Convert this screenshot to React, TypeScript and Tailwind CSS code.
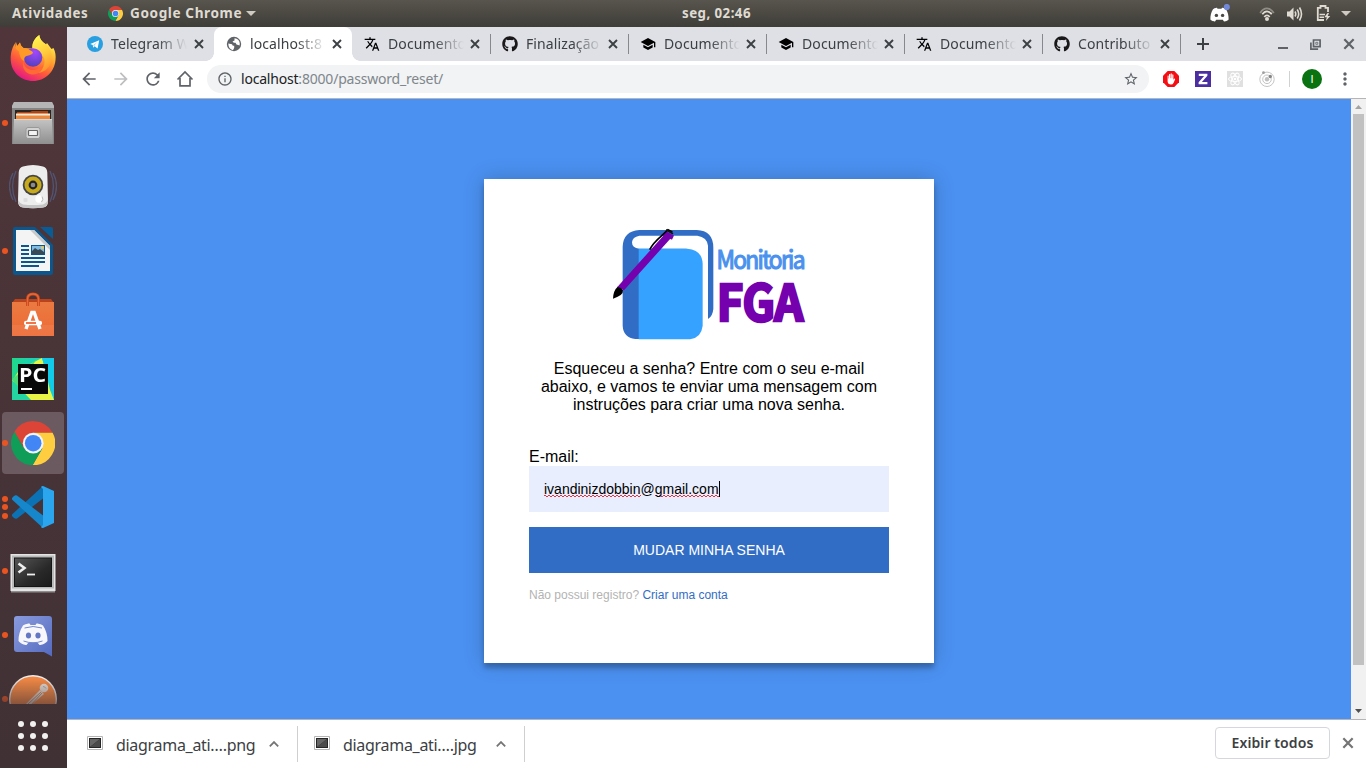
import React from "react";
import {
  MdAdd,
  MdArrowBack,
  MdArrowForward,
  MdInfoOutline,
  MdMoreVert,
  MdRefresh,
  MdSchool,
  MdStarBorder,
  MdTranslate,
} from "react-icons/md";
import { FaGithub } from "react-icons/fa";

const UI = "font-['Noto_Sans','Open_Sans',sans-serif]";

function ChromeLogo({ className }: { className: string }) {
  return (
    <svg viewBox="-22.2 -22.2 44.4 44.4" className={className}>
      <path d="M19.4-10.5H0L-9.1 5.25-18.8-11.55A22.05 22.05 0 0 1 19.4-10.5Z" fill="#db4437" />
      <path d="M19.4-10.5H0L9.1 5.25-.6 22.05A22.05 22.05 0 0 0 19.4-10.5Z" fill="#ffcd40" />
      <path d="M-.6 22.05 9.1 5.25H-9.1L-18.8-11.55A22.05 22.05 0 0 0-.6 22.05Z" fill="#0f9d58" />
      <circle r="10.4" fill="#f4f4f4" />
      <circle r="8.3" fill="#4285f4" />
    </svg>
  );
}

function CloseIcon({ className }: { className: string }) {
  return (
    <svg viewBox="0 0 12 12" className={className} fill="none" stroke="currentColor" strokeWidth="1.900">
      <path d="m2 2 8 8M10 2l-8 8" />
    </svg>
  );
}

function TopBar() {
  return (
    <header
      className={`${UI} flex h-[27px] w-full items-center bg-gradient-to-b from-[#58554e] to-[#3f3d38] text-[13.3px] font-bold text-[#dfdbd2]`}
    >
      <div className="flex w-[456px] items-center pl-3">
        <span className="w-[96px] whitespace-nowrap tracking-[0.65px]">Atividades</span>
        <ChromeLogo className="h-[15px] w-[15px]" />
        <span className="ml-[7px] w-[111px] whitespace-nowrap tracking-[0.6px] text-[13.600px]">Google Chrome</span>
        <svg viewBox="0 0 10 5" className="ml-[5px] h-[5px] w-[10px]">
          <path d="M0 0h10L5 5z" fill="#cfcbc3" />
        </svg>
      </div>
      <div className="w-[521px] text-center text-[13.3px] tracking-[0.45px]">seg, 02:46</div>
      <div className="flex flex-1 items-center pl-[231px]">
        <svg viewBox="0 0 22 20" className="h-5 w-[22px] shrink-0">
          <path
            d="M5 5.2C7 3.8 9 3.8 9 3.8l.5.9h4l.5-.9s2 0 4 1.4c1.8 3 2.8 6.500 2.600 10.300-1.500 1.900-4.600 2-4.600 2l-1.200-1.700H8.200L7 17.500s-3.100-.1-4.600-2C2.200 11.700 3.200 8.200 5 5.200Z"
            fill="#fff"
          />
          <circle cx="8.400" cy="11.400" r="1.700" fill="#4b4943" />
          <circle cx="14.600" cy="11.400" r="1.700" fill="#4b4943" />
          <circle cx="18.800" cy="3" r="3.100" fill="#7289da" />
        </svg>
        <svg viewBox="0 0 16 16" className="ml-[29px] h-4 w-4 shrink-0" fill="none" stroke="#dfdbd2">
          <path d="M1.200 6C5-.1 11 -.1 14.800 6" transform="translate(0 1)" strokeWidth="1.800" opacity=".45" />
          <path d="M3.300 8.300c2.700-4 6.700-4 9.400 0" strokeWidth="1.700" />
          <path d="M5.300 11c1.500-2.300 3.900-2.300 5.400 0" strokeWidth="1.700" />
          <circle cx="8" cy="13" r="2" fill="#dfdbd2" stroke="none" />
        </svg>
        <svg viewBox="0 0 17 16" className="ml-[11px] h-4 w-[17px] shrink-0" fill="none" stroke="#dfdbd2">
          <path d="M1 5.500h2.500L7.500 1.500v13l-4-4H1z" fill="#dfdbd2" stroke="none" />
          <path d="M9 5.500q1.500 2.500 0 5M11.200 3.500q3 4.500 0 9M13.500 1.500q4 6.500 0 13" strokeWidth="1.600" />
        </svg>
        <svg viewBox="0 0 15 17" className="ml-[13px] h-[17px] w-[15px] shrink-0" fill="none" stroke="#dfdbd2">
          <path d="M12 7V2.800H9.500V1h-5v1.800H1.800V15H8" strokeWidth="1.800" />
          <path d="M3.500 9.500H9M3.500 12.200H8" strokeWidth="1.500" />
          <path d="m11.500 8-3.200 4.200h2.500L9.800 16l4.500-5h-2.600L13 8z" fill="#dfdbd2" stroke="none" />
        </svg>
        <svg viewBox="0 0 10 5" className="ml-[10px] h-[5px] w-[10px] shrink-0">
          <path d="M0 0h10L5 5z" fill="#cfcbc3" />
        </svg>
      </div>
    </header>
  );
}

function Firefox() {
  return (
    <svg viewBox="0 0 48 48" className="-mt-[2px] h-12 w-12">
      <defs>
        <linearGradient id="ffBody" x1=".8" y1=".1" x2=".3" y2="1">
          <stop offset="0" stopColor="#fff44f" />
          <stop offset=".35" stopColor="#ffa52e" />
          <stop offset=".65" stopColor="#ff5a3a" />
          <stop offset="1" stopColor="#e31587" />
        </linearGradient>
        <linearGradient id="ffFlame" x1=".4" y1="0" x2=".7" y2="1">
          <stop offset="0" stopColor="#fff44f" />
          <stop offset=".5" stopColor="#ffcb3c" />
          <stop offset="1" stopColor="#ff8a2b" />
        </linearGradient>
        <radialGradient id="ffGlobe" cx=".6" cy=".2" r=".9">
          <stop offset="0" stopColor="#a347ff" />
          <stop offset="1" stopColor="#4b3fb5" />
        </radialGradient>
      </defs>
      <path
        d="M7 8C6 11 6.500 13 6.500 14.500l4.500-6c.500 2.500 1.500 4 3.500 5.500l9 .5C23 8 26 4 30.300 1c.500 5 3.700 7 6.700 9.500l1-1.500 4.500 6 2-1c2 4 2.500 8 2 12C45.500 38 36 47 24 47S2 38 1.700 25.500C1.600 18 3.500 12.500 7 8Z"
        fill="url(#ffBody)"
      />
      <path
        d="M30.300 1c.500 5 3.700 7 6.700 9.500C42 14.500 44 21 42 28c-2 7-8 11-14 11 6-3 9-9 7-15-2-5-7-6-11.500-9C22.500 9 26 4 30.300 1Z"
        fill="url(#ffFlame)"
      />
      <circle cx="24" cy="23.500" r="9.300" fill="url(#ffGlobe)" />
      <path
        d="M7 8c.5 2 1 3 1.500 3.800L11 8.500c.5 2.500 1.500 4 3.500 5.500 3 .2 5 1 7 2.600 1.300.9 2.500 1.200 2.500 2.400-2 2.500-5 2-7.500 3.500-1.500 1-1.500 3-1 5-4-2-5-7-5.500-10L6 14Z"
        fill="#ff9a28"
      />
      <path d="M14.500 25c-1 8 5 11.500 10.500 11 4-.4 7-2 9-5 0 6-5 10-11 9.500C16 40 12 33 14.500 25Z" fill="#ff6a35" />
    </svg>
  );
}

function Files() {
  return (
    <svg viewBox="0 0 48 48" className="h-12 w-12">
      <defs>
        <linearGradient id="fileFront" x1="0" y1="0" x2="0" y2="1">
          <stop offset="0" stopColor="#c4c4c4" />
          <stop offset="1" stopColor="#8f8f8f" />
        </linearGradient>
      </defs>
      <path d="M5 3h38l2 4v38H3V7z" fill="#858585" />
      <path d="M5 3h38l2 4v2H3V7z" fill="#b5b5b5" />
      <path d="M6 11h36v9H6z" fill="#2b2522" />
      <path d="M8 13h13l2-1h16v8H8z" fill="#b5410d" />
      <path d="M7 14.500h34V20H7z" fill="#f4ead9" />
      <path d="M7 16.500h34V20H7z" fill="#f0883c" />
      <path d="M5 20h38l1 25H4z" fill="url(#fileFront)" />
      <path d="M5 20.500h38" stroke="#d6d6d6" />
      <rect x="17" y="28.500" width="14" height="11" rx="2" fill="#d2d2d2" stroke="#989898" />
      <rect x="19.500" y="31.500" width="9" height="5" rx=".5" fill="#f3f3f3" stroke="#666" strokeWidth="1.200" />
    </svg>
  );
}

function Rhythmbox() {
  return (
    <svg viewBox="0 0 48 48" className="h-12 w-12">
      <g fill="none" stroke="#5878b4" strokeWidth="1.400" opacity=".45">
        <path d="M4 10q-7 13 0 27M7 8q-7 15 0 31M44 10q7 13 0 27M41 8q7 15 0 31" />
      </g>
      <path d="M14 3.500q10-3 20 0 4 1 4.300 6L39 38q0 6-5 6.500-10 1.500-20 0-5-.5-5-6.500l.7-28.500q.3-5 4.300-6Z" fill="#ededed" />
      <path d="M9 36q0 8 5 8.500 10 1.500 20 0 5-.5 5-8.500-1 4-5 5.500-10 1-20 0-4-1.500-5-5.500Z" fill="#c5c5c5" />
      <circle cx="24" cy="22" r="10.300" fill="#444" />
      <circle cx="24" cy="22" r="8.500" fill="#c7a91c" />
      <circle cx="24" cy="22" r="4.400" fill="#252525" />
      <circle cx="24" cy="22" r="2.300" fill="#8b8b8b" />
      <circle cx="30" cy="36" r="3.700" fill="#fff" />
      <path d="M33 33.500q2 3-.5 5.500" stroke="#b5b5b5" fill="none" />
      <rect x="14.500" y="35" width="4" height="4" rx="1" fill="#ddd" />
    </svg>
  );
}

function Writer() {
  return (
    <svg viewBox="0 0 48 48" className="h-12 w-12">
      <path d="M6 0h20l18 18v28q0 2-2 2H6q-2 0-2-2V2q0-2 2-2Z" fill="#0b568c" />
      <path d="M31 0h11q2 0 2 2v10z" fill="#0a5c96" />
      <path d="M7 3h18l16 16v25H7z" fill="#f4f4f4" />
      <path d="m25 3 16 16v4L21 3z" fill="#c9c9c9" />
      <g fill="#0b568c">
        <path d="M12 18h8v2h-8zM12 22h8v2h-8zM12 26h8v2h-8zM12 30h24v2H12zM12 34h24v2H12zM12 38h18v2H12z" />
        <path d="M22 18h14v10H22z" />
      </g>
      <path d="M23 19h12v8H23z" fill="#7fbde6" />
      <path d="m23 27 0-3 3-3 3 2 2-1 4 3v2z" fill="#394a55" />
      <circle cx="33.500" cy="20.500" r="1.500" fill="#f3c74a" />
    </svg>
  );
}

function Software() {
  return (
    <svg viewBox="0 0 48 48" className="h-12 w-12">
      <defs>
        <linearGradient id="bag" x1="0" y1="0" x2="0" y2="1">
          <stop offset="0" stopColor="#ea7a41" />
          <stop offset="1" stopColor="#ee6a35" />
        </linearGradient>
      </defs>
      <path d="M6 8h36l3 4H3z" fill="#b8431c" />
      <path d="M3 11h42v34H3z" fill="url(#bag)" />
      <path d="M3 34h42v11H3z" fill="#fff" opacity=".07" />
      <path d="M18.500 15V8q0-5 5.500-5t5.500 5v7" fill="none" stroke="#c9491c" strokeWidth="3" />
      <path d="M18.500 15V8q0-5 5.500-5t5.500 5v7" fill="none" stroke="#e8683a" strokeWidth="1.300" />
      <path d="m17 38 5.800-16.500h2.400L31 38" fill="none" stroke="#fff" strokeWidth="3.400" />
      <rect x="15" y="29.800" width="18" height="4.400" rx="2" fill="#fff" />
      <path d="M17 32h10" stroke="#e95420" strokeWidth="1.600" />
    </svg>
  );
}

function PyCharm() {
  return (
    <svg viewBox="0 0 48 48" className="h-12 w-12">
      <defs>
        <linearGradient id="pyBg" x1="0" y1="0" x2="1" y2="0">
          <stop offset="0" stopColor="#21d789" />
          <stop offset="1" stopColor="#16cbe0" />
        </linearGradient>
      </defs>
      <path d="M3 3h42v42H3z" fill="url(#pyBg)" />
      <path d="m3 26 8-12 22-11 2 7 6 25 4 10H20z" fill="#e6f545" />
      <path d="m3 24 25-20L18 18 9 34z" fill="#4bdc78" />
      <path d="M3 25v20h19z" fill="#25d5a1" />
      <path d="M33 3h12v39z" fill="#12cbe8" />
      <path d="M9 9h30v30H9z" fill="#080808" />
      <text
        x="10"
        y="26.500"
        fill="#fff"
        fontSize="20"
        fontWeight="700"
        textLength="27"
        lengthAdjust="spacingAndGlyphs"
        className="font-['Open_Sans','Noto_Sans',sans-serif]"
      >
        PC
      </text>
      <path d="M12 33h11v2H12z" fill="#fff" />
    </svg>
  );
}

function VsCode() {
  return (
    <svg viewBox="0 0 48 48" className="h-12 w-12">
      <path d="M34 3v12.500L8 35.500q-1.500.7-3-.5l-1.700-1.700q-.8-1.300.2-2.300Z" fill="#0a72b5" />
      <path d="M34 45V32.500L8 12.500q-1.500-.7-3 .5l-1.700 1.700q-.8 1.300.2 2.300Z" fill="#1687cb" />
      <path d="m34 3 11 5v32l-11 5q-1.500 0-2-1l2-2V6l-2-2q.5-1 2-1Z" fill="#2aa5ee" />
    </svg>
  );
}

function Terminal() {
  return (
    <svg viewBox="0 0 48 48" className="h-12 w-12">
      <defs>
        <linearGradient id="term" x1="0" y1="0" x2="1" y2="1">
          <stop offset="0" stopColor="#555" />
          <stop offset=".6" stopColor="#292929" />
          <stop offset="1" stopColor="#1b1b1b" />
        </linearGradient>
      </defs>
      <path d="M2 8h44v37.500H2z" fill="#8e8e8e" />
      <path d="M1.500 7h45v37h-45z" fill="#e4e4e4" />
      <path d="M3 8.500h42v33H3z" fill="#b9b9b9" />
      <path d="M5 10.500h38V40H5z" fill="#151515" />
      <path d="M6 11.500h36V39H6z" fill="url(#term)" />
      <path d="m9.500 16.500 6 4.500-6 4.500" fill="none" stroke="#eee" strokeWidth="2.600" />
      <path d="M18 27.500h8" stroke="#eee" strokeWidth="1.800" />
    </svg>
  );
}

function Discord() {
  return (
    <svg viewBox="0 0 48 48" className="h-12 w-12">
      <defs>
        <linearGradient id="disc" x1="0" y1="0" x2="1" y2="1">
          <stop offset="0" stopColor="#8a9bdd" />
          <stop offset="1" stopColor="#536ac0" />
        </linearGradient>
      </defs>
      <path d="M8 5h32q3 0 3 3v37.500l-9-5L36 41H8q-3 0-3-3V8q0-3 3-3Z" fill="url(#disc)" />
      <path
        d="M14 14.500c3.500-2 6.500-2 6.500-2l1 1.500h5l1-1.500s3 0 6.500 2c3 4.500 4.700 10 4.500 15.500-3 4-8 4-8 4l-2-2.500h-9l-2 2.500s-5 0-8-4C9.300 24.500 11 19 14 14.500Z"
        fill="#f7f7fb"
      />
      <ellipse cx="19.500" cy="24.500" rx="2.600" ry="2.900" fill="#6377c4" />
      <ellipse cx="29" cy="24.500" rx="2.600" ry="2.900" fill="#6377c4" />
      <path d="M15.500 17q8.500-3 17.500 0M14.500 30q9.500 3.500 19 0" fill="none" stroke="#7386cf" strokeWidth="1" />
    </svg>
  );
}

function Postman() {
  return (
    <svg viewBox="0 0 48 48" className="h-12 w-12">
      <circle cx="24" cy="24" r="24" fill="#eee" />
      <circle cx="24" cy="24" r="22.600" fill="#f58a45" />
      <path d="m17 29 14-14 4 4-14 12z" fill="#eadfd6" />
      <path d="m19 29 13-12M21 31l12-13" stroke="#b77a4c" strokeWidth=".8" />
      <circle cx="35" cy="13" r="4.300" fill="#eadfd6" />
      <path d="M34 11.500q2 0 3 2" stroke="#aaa" fill="none" />
    </svg>
  );
}

const dock: { icon: React.ReactNode; dots: number; active?: boolean }[] = [
  { icon: <Firefox />, dots: 0 },
  { icon: <Files />, dots: 1 },
  { icon: <Rhythmbox />, dots: 0 },
  { icon: <Writer />, dots: 1 },
  { icon: <Software />, dots: 0 },
  { icon: <PyCharm />, dots: 0 },
  { icon: <ChromeLogo className="m-[1.800px] h-[44.400px] w-[44.400px]" />, dots: 1, active: true },
  { icon: <VsCode />, dots: 3 },
  { icon: <Terminal />, dots: 1 },
  { icon: <Discord />, dots: 1 },
  { icon: <Postman />, dots: 1 },
];

function Dock() {
  return (
    <aside className="flex h-[741px] w-[67px] shrink-0 flex-col bg-gradient-to-b from-[#50363a] to-[#403135]">
      <div className="h-[677px] overflow-hidden [mask-image:linear-gradient(to_bottom,#000_650px,#0006_677px)]">
        <div className="flex flex-col">
          {dock.map((item, i) => (
            <div key={i} className="flex h-16 shrink-0 items-center">
              <div
                className={
                  item.active
                    ? "ml-[2px] flex h-[62px] w-[62px] items-center rounded-[4px] bg-[#6b5b60]"
                    : "ml-[2px] flex h-[62px] w-[62px] items-center"
                }
              >
                <div className="flex w-[7px] flex-col items-start gap-[2.500px]">
                  {Array.from({ length: item.dots }, (_, d) => (
                    <span key={d} className="h-[6px] w-[6px] rounded-full bg-[#e95420]" />
                  ))}
                </div>
                {item.icon}
              </div>
            </div>
          ))}
        </div>
      </div>
      <div className="ml-[18px] mt-[17px] grid w-[30px] grid-cols-3 gap-[6px]">
        {Array.from({ length: 9 }, (_, d) => (
          <span key={d} className="h-[6px] w-[6px] rounded-full bg-[#f2f1f0]" />
        ))}
      </div>
    </aside>
  );
}

function Telegram() {
  return (
    <svg viewBox="0 0 16 16" className="h-4 w-4">
      <circle cx="8" cy="8" r="8" fill="#279fe0" />
      <path d="m3.200 7.900 9-3.700-1.600 8.200-3-2.200-1.400 1.500-.5-2.700z" fill="#fff" />
      <path d="m6 9.300 4.300-3.200-3.200 3.800z" fill="#9fcdea" />
    </svg>
  );
}

function Globe() {
  return (
    <svg viewBox="0 0 16 16" className="h-4 w-4">
      <circle cx="8" cy="8" r="7.200" fill="#5f6368" />
      <path
        d="M2.300 7.500 6 8.300l.8 1.500h1.400v2L7 14.200Q2.300 13 2.300 7.500ZM8.500 2.300q4.700.4 5.300 5.200l-.3 2-1.300-.6-1.700-.4-1-1.800H7.800L6.500 5.500l2-1z"
        fill="#fff"
      />
    </svg>
  );
}

const tabs: { icon: React.ReactNode; label: string; active?: boolean }[] = [
  { icon: <Telegram />, label: "Telegram W" },
  { icon: <Globe />, label: "localhost:8", active: true },
  { icon: <MdTranslate className="h-4 w-4 text-black" />, label: "Documento" },
  { icon: <FaGithub className="h-4 w-4 text-[#191717]" />, label: "Finalização" },
  { icon: <MdSchool className="h-4 w-4 text-black" />, label: "Documento" },
  { icon: <MdSchool className="h-4 w-4 text-black" />, label: "Documento" },
  { icon: <MdTranslate className="h-4 w-4 text-black" />, label: "Documento" },
  { icon: <FaGithub className="h-4 w-4 text-[#191717]" />, label: "Contributo" },
];

function TabStrip() {
  return (
    <div className="flex h-[34px] items-stretch bg-[#dee0e6] pl-[9px]">
      {tabs.map((tab, i) => (
        <div
          key={i}
          className={
            tab.active
              ? "relative flex w-[138px] shrink-0 items-center rounded-t-lg bg-white pl-3"
              : "relative flex w-[138px] shrink-0 items-center pl-3"
          }
        >
          {tab.active && (
            <>
              <span className="absolute bottom-0 -left-2 h-2 w-2 bg-[radial-gradient(circle_at_0_0,transparent_7.500px,#fff_8px)]" />
              <span className="absolute bottom-0 -right-2 h-2 w-2 bg-[radial-gradient(circle_at_100%_0,transparent_7.500px,#fff_8px)]" />
            </>
          )}
          <span className={i === 0 ? "-ml-px flex w-6 shrink-0 items-center" : "flex w-6 shrink-0 items-center"}>
            {tab.icon}
          </span>
          <span
            className={
              i === 0
                ? "-mt-px w-[77px] shrink-0 overflow-hidden whitespace-nowrap text-[14px] tracking-[0.1px] text-[#3c4043] [mask-image:linear-gradient(to_right,#000_46px,transparent_76px)]"
                : "-mt-px w-[76px] shrink-0 overflow-hidden whitespace-nowrap text-[14px] tracking-[0.1px] text-[#3c4043] [mask-image:linear-gradient(to_right,#000_46px,transparent_76px)]"
            }
          >
            {tab.label}
          </span>
          <CloseIcon className="ml-[5px] h-3 w-3 shrink-0 text-[#3c4043]" />
          {i > 1 && <span className="-mr-px ml-auto h-5 w-px bg-[#86888d]" />}
        </div>
      ))}
      <div className="flex flex-1 items-center text-[#3c4043]">
        <svg viewBox="0 0 20 20" className="ml-[13px] h-5 w-5" stroke="currentColor" strokeWidth="2">
          <path d="M4 10h12M10 4v12" />
        </svg>
        <span className="ml-[65px] mt-[8px] h-[2px] w-[10px] bg-[#5f6368]" />
        <svg viewBox="0 0 11 11" className="ml-[22px] h-[11px] w-[11px]" fill="none" stroke="#5f6368" strokeWidth="1.700">
          <path d="M3.500 1h6.600v6.600H3.500zM.9 3.500v6.600h7.200" />
          <path d="M5.800 3.300h2v2h-2z" strokeWidth=".8" />
        </svg>
        <CloseIcon className="ml-[21px] h-[14px] w-[14px] text-[#5f6368]" />
      </div>
    </div>
  );
}

function Toolbar() {
  return (
    <div className="flex h-[38px] items-center border-b border-[#b6b4b6] bg-white pb-px text-[#5f6368]">
      <MdArrowBack className="ml-[12px] h-5 w-5 shrink-0" />
      <MdArrowForward className="ml-[12px] h-5 w-5 shrink-0 text-[#bcbec0]" />
      <MdRefresh className="ml-[12px] h-5 w-5 shrink-0" />
      <svg viewBox="0 0 20 20" className="ml-[12px] h-5 w-5 shrink-0" fill="none" stroke="currentColor" strokeWidth="1.700">
        <path d="M2.500 10.500 10 3l7.500 7.500M5 9v7.800h10V9" />
      </svg>
      <div className="ml-[12px] flex h-7 w-[942px] shrink-0 items-center rounded-full bg-[#f1f3f4]">
        <MdInfoOutline className="ml-[10px] h-4 w-4 shrink-0" />
        <span className="-mt-px ml-[8px] whitespace-nowrap text-[14px] tracking-[-0.2px] text-[#80868b]">
          <span className="text-[#202124]">localhost</span>:8000/password_reset/
        </span>
        <MdStarBorder className="ml-auto mr-[10px] h-4 w-4" />
      </div>
      <svg viewBox="0 0 16 16" className="ml-[14px] h-4 w-4 shrink-0">
        <path d="M4.700 0h6.600L16 4.700v6.600L11.300 16H4.700L0 11.300V4.700z" fill="#f40d12" />
        <path
          d="m4.600 8.200V4.700q.5-.6 1 0V7.500h.4V3.300q.6-.7 1.200 0v4h.4V2.700q.6-.7 1.200 0v4.600h.4V3.700q.6-.7 1.200 0v5l1-1.200q1 0 .7.900l-1.600 3.600q-.7 1.500-2.500 1.500-3.200 0-3.400-3z"
          fill="#fff"
        />
      </svg>
      <svg viewBox="0 0 16 16" className="ml-4 h-4 w-4 shrink-0">
        <path d="M0 0h16v16H0z" fill="#4b2e9f" />
        <path d="M3.800 2.800h8.600v2L6.900 11h5.500v2.200H3.600v-2L9.100 5H3.800z" fill="#fff" />
      </svg>
      <svg viewBox="0 0 16 16" className="ml-4 h-4 w-4 shrink-0">
        <path d="M0 0h16v16H0z" fill="#e0e0e0" />
        <g fill="none" stroke="#fff" strokeWidth="1">
          <ellipse cx="8" cy="8" rx="6.500" ry="2.600" />
          <ellipse cx="8" cy="8" rx="6.500" ry="2.600" transform="rotate(60 8 8)" />
          <ellipse cx="8" cy="8" rx="6.500" ry="2.600" transform="rotate(120 8 8)" />
        </g>
        <circle cx="8" cy="8" r="1.300" fill="#fff" />
      </svg>
      <svg viewBox="0 0 16 16" className="ml-4 h-4 w-4 shrink-0" fill="none" stroke="#c4c4c4">
        <circle cx="8" cy="8.300" r="7.200" />
        <circle cx="8" cy="8.300" r="4.300" />
        <circle cx="8" cy="8.300" r="2.200" fill="#c0c0c0" stroke="none" />
        <circle cx="11.300" cy="5.500" r="1.700" fill="#858585" stroke="none" />
        <circle cx="4.500" cy="1.700" r="1.400" fill="#a0a0a0" stroke="none" />
      </svg>
      <span className="ml-[14px] h-4 w-px bg-[#d0d1d3]" />
      <span className="ml-[12px] flex h-5 w-5 shrink-0 items-center justify-center rounded-full bg-[#0b7211] font-['Liberation_Sans',sans-serif] text-[11px] text-white">
        I
      </span>
      <MdMoreVert className="ml-[13px] h-5 w-5 shrink-0" />
    </div>
  );
}

function Logo() {
  return (
    <svg viewBox="0 0 654 405" className="h-[135px] w-[218px]">
      <path
        d="M118 45H290Q340 47 340 98V282Q338 304 324 312V92Q321 66 292 62H118Q97 66 96 82 96 100 118 101H260L180 372H106Q70 368 68 332V95Q70 48 118 45Z"
        fill="#326dc5"
      />
      <path d="M116 101H262Q306 104 308 146V332Q304 368 270 373H116Z" fill="#35a2ff" />
      <path d="M201 50 219 62 72 226 52 216Z" fill="#7400ae" />
      <path d="M192 55 219 68" stroke="#7400ae" strokeWidth="14" />
      <path d="M149 104Q160 84 182 65L204 44 217 51" fill="none" stroke="#000" strokeWidth="5" />
      <path d="M198 44 219 56" stroke="#111" strokeWidth="5" />
      <path d="M53 215Q64 217 69 226 71 241 39 251 40 226 53 215Z" fill="#000" />
      <text
        x="388"
        y="162"
        transform="scale(.9 1)"
        fill="#4b91ee"
        stroke="#4b91ee"
        strokeWidth="3.500"
        fontSize="76"
        textLength="297"
        lengthAdjust="spacing"
        className="font-['Noto_Sans_CJK_SC','Noto_Sans',sans-serif]"
      >
        Monitoria
      </text>
      <text
        x="381"
        y="317"
        transform="scale(.92 1)"
        fill="#7400ae"
        stroke="#7400ae"
        strokeWidth="8"
        fontSize="148"
        fontWeight="700"
        textLength="282"
        lengthAdjust="spacing"
        className="font-['Noto_Sans_CJK_SC','Noto_Sans',sans-serif]"
      >
        FGA
      </text>
    </svg>
  );
}

function Misspelled({ children }: { children: React.ReactNode }) {
  return (
    <span className="h-4 bg-[linear-gradient(90deg,#e8333a_50%,transparent_50%),linear-gradient(90deg,transparent_50%,#e8333a_50%)] bg-[length:4px_1px,4px_1px] bg-[position:0_14px,0_15px] bg-repeat-x">
      {children}
    </span>
  );
}

function ResetCard() {
  return (
    <main className="flex h-[484px] w-[450px] flex-col bg-white px-[45px] pt-[36px] font-['Liberation_Sans',Arial,sans-serif] text-black shadow-[0_0_20px_0_rgba(0,0,0,0.2),0_5px_5px_0_rgba(0,0,0,0.24)]">
      <div className="flex justify-center">
        <Logo />
      </div>
      <p className="mt-[10px] text-center text-base leading-[18px]">
        Esqueceu a senha? Entre com o seu e-mail
        <br />
        abaixo, e vamos te enviar uma mensagem com
        <br />
        instruções para criar uma nova senha.
      </p>
      <label className="mt-[34px] block text-base leading-[18px]">E-mail:</label>
      <div className="flex h-[46px] items-center bg-[#e8eefe] px-[15px] text-[14px] leading-4">
        <Misspelled>ivandinizdobbin</Misspelled>
        <span>@</span>
        <Misspelled>gmail.com</Misspelled>
        <span className="h-4 w-px bg-black" />
      </div>
      <button className="mt-[15px] h-[46px] bg-[#326dc5] text-[14px] text-white">MUDAR MINHA SENHA</button>
      <p className="mt-[15px] text-[12px] leading-[14px] text-[#b3b3b3]">
        Não possui registro? <a className="text-[#326dc5]">Criar uma conta</a>
      </p>
    </main>
  );
}

function Scrollbar() {
  return (
    <div className="flex w-[15px] shrink-0 flex-col items-center bg-[#f1f1f1]">
      <svg viewBox="0 0 15 15" className="h-[15px] w-[15px]">
        <path d="M4 10h7L7.500 6z" fill="#a3a3a3" />
      </svg>
      <div className="h-[551px] w-[11px] bg-[#c1c1c1]" />
      <svg viewBox="0 0 15 15" className="mt-auto h-[15px] w-[15px]">
        <path d="M4 5h7L7.500 9z" fill="#505050" />
      </svg>
    </div>
  );
}

function Download({ name, first }: { name: string; first?: boolean }) {
  return (
    <div className={first ? "flex w-[231px] items-center pl-5" : "flex w-[227px] items-center pl-4"}>
      <svg viewBox="0 0 16 14" className="mt-[-3px] h-[14px] w-4 shrink-0">
        <path d="M.5.500h15v13H.5z" fill="#fff" stroke="#b5b5b5" />
        <path d="M2 2h12v10H2z" fill="#252525" />
        <path d="M3 3h10L3 11z" fill="#666" />
        <path d="M13 3v8H3z" fill="#4a4a4a" />
      </svg>
      <span className="ml-[13px] mt-px w-[140px] whitespace-nowrap text-[16px] tracking-[-0.3px] text-[#3c4043]">
        {name}
      </span>
      <svg viewBox="0 0 10 6" className="ml-[13px] h-[6px] w-[10px] shrink-0" fill="none" stroke="#757575" strokeWidth="1.800">
        <path d="m.8 5.300 4.200-4.200 4.200 4.200" />
      </svg>
      <span className="ml-auto h-9 w-px bg-[#cfcfcf]" />
    </div>
  );
}

function DownloadShelf() {
  return (
    <footer className="flex h-[49px] items-center border-t border-[#b6b4b6] bg-white">
      <Download name="diagrama_ati….png" first />
      <Download name="diagrama_ati….jpg" />
      <button className="-mt-[2px] ml-auto h-8 w-[115px] rounded-[4px] border border-[#d5d7dc] pb-[2px] text-[14px] font-semibold tracking-[0.100px] text-[#3c4043]">
        Exibir todos
      </button>
      <CloseIcon className="-mt-[2px] ml-[11px] mr-[11px] h-[14px] w-[14px] text-[#757575]" />
    </footer>
  );
}

export default function App() {
  return (
    <div className="flex h-[768px] w-[1366px] flex-col overflow-hidden">
      <TopBar />
      <div className="flex min-h-0 flex-1">
        <Dock />
        <div className={`${UI} flex w-[1299px] flex-col`}>
          <TabStrip />
          <Toolbar />
          <div className="flex h-[620px]">
            <div className="flex flex-1 items-start justify-center bg-[#4b91f1] pt-20">
              <ResetCard />
            </div>
            <Scrollbar />
          </div>
          <DownloadShelf />
        </div>
      </div>
    </div>
  );
}
